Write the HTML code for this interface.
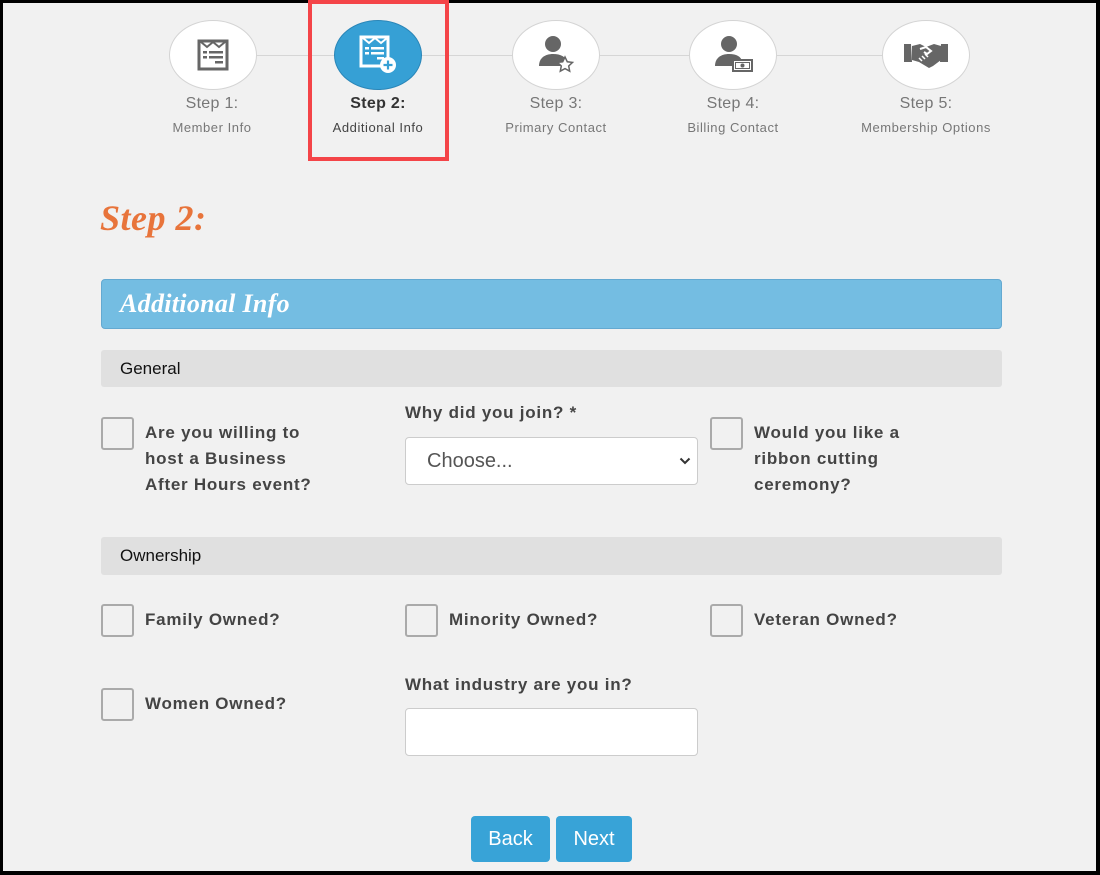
<!DOCTYPE html>
<html><head><meta charset="utf-8"><style>
*{box-sizing:border-box;margin:0;padding:0}
body{width:1100px;height:875px;background:#000;position:relative;overflow:hidden;font-family:"Liberation Sans",Arial,sans-serif}
#pg{position:absolute;left:3px;top:3px;width:1093px;height:868px;background:#f1f1f1}
.a{position:absolute}
.line{position:absolute;top:55px;height:1px;background:#d6d6d6}
.circ{position:absolute;width:88px;height:70px;top:20px;border-radius:50%;background:#fff;border:1px solid #d4d4d4;display:flex;align-items:center;justify-content:center}
.st{position:absolute;width:200px;text-align:center;color:#777;font-size:16px;top:95px;letter-spacing:0.3px}
.sub{position:absolute;width:200px;text-align:center;color:#777;font-size:13px;top:120px;letter-spacing:0.55px}
.bar{position:absolute;left:101px;width:901px;background:#e0e0e0;border-radius:3px;font-size:17px;color:#111;padding-left:19px}
.cb{position:absolute;width:33px;height:33px;border:2px solid #aaa;border-radius:3px;background:#f1f1f1}
.lb{position:absolute;font-size:17px;font-weight:bold;color:#444;line-height:26px;letter-spacing:0.75px}
.btn{position:absolute;top:816px;height:46px;background:#38a3d7;border-radius:4px;color:#fff;font-size:20px;text-align:center;line-height:46px}
</style></head><body>
<div id="pg"></div>
<div class="line" style="left:256px;width:80px"></div>
<div class="line" style="left:421px;width:92px"></div>
<div class="line" style="left:599px;width:92px"></div>
<div class="line" style="left:777px;width:106px"></div>

<div class="circ" style="left:169px"><svg width="34" height="34" viewBox="0 0 34 34"><rect x="3" y="3" width="28" height="28" fill="none" stroke="#666" stroke-width="3"/><path d="M5 4l6 5 6-5 6 5 6-5" fill="none" stroke="#666" stroke-width="2"/><rect x="7" y="13" width="4" height="2.5" fill="#666"/><rect x="13" y="13" width="14" height="2.5" fill="#666"/><rect x="7" y="18" width="4" height="2.5" fill="#666"/><rect x="13" y="18" width="14" height="2.5" fill="#666"/><rect x="19" y="23" width="8" height="2.5" fill="#666"/></svg></div>
<div class="circ" style="left:334px;background:#36a0d5;border-color:#2a86b8"><svg width="42" height="42" viewBox="0 0 42 42"><rect x="4" y="3" width="27" height="29" fill="none" stroke="#fff" stroke-width="3"/><path d="M6 4l6 5 6-5 6 5 6-5" fill="none" stroke="#fff" stroke-width="2"/><rect x="8" y="13" width="4" height="2.5" fill="#fff"/><rect x="14" y="13" width="13" height="2.5" fill="#fff"/><rect x="8" y="18" width="4" height="2.5" fill="#fff"/><rect x="14" y="18" width="13" height="2.5" fill="#fff"/><rect x="20" y="23" width="7" height="2.5" fill="#fff"/><circle cx="31" cy="31" r="8" fill="#fff"/><path d="M31 26.5v9M26.5 31h9" stroke="#36a0d5" stroke-width="2.2"/></svg></div>
<div class="circ" style="left:512px"><svg width="44" height="44" viewBox="0 0 44 44"><circle cx="19" cy="11" r="8" fill="#666"/><path d="M5 33c0-8 6-12 14-12s13 3 14 8v4z" fill="#666"/><path d="M31 24l2.3 4.8 5.2.6-3.8 3.6 1 5.2-4.7-2.6-4.7 2.6 1-5.2-3.8-3.6 5.2-.6z" fill="#fff" stroke="#666" stroke-width="1.5"/></svg></div>
<div class="circ" style="left:689px"><svg width="44" height="44" viewBox="0 0 44 44"><circle cx="18" cy="11" r="8" fill="#666"/><path d="M4 33c0-8 6-12 14-12s12 3 13 7v5z" fill="#666"/><rect x="22" y="27" width="19" height="11" fill="#fff" stroke="#666" stroke-width="2"/><rect x="24.5" y="29.5" width="14" height="6" fill="none" stroke="#666" stroke-width="1"/><circle cx="31.5" cy="32.5" r="2" fill="#666"/></svg></div>
<div class="circ" style="left:882px"><svg width="46" height="30" viewBox="0 0 46 30"><path d="M1 4h7l1 18H1z M45 4h-7l-1 18h8z" fill="#666"/><path d="M9 6l8-2 6 3 8-3 7 2v14l-8 6-4 2-5-3-5-3-7-2z" fill="#666"/><path d="M17 9l6-2 5 4-4 3-3-2" fill="none" stroke="#fff" stroke-width="2"/><path d="M16 18l3 3M19 16l3 3M22 14l3 3" stroke="#fff" stroke-width="1.5"/></svg></div>

<div class="st" style="left:112px">Step 1:</div><div class="sub" style="left:112px">Member Info</div>
<div class="st" style="left:278px;color:#333;font-weight:bold">Step 2:</div><div class="sub" style="left:278px;color:#444">Additional Info</div>
<div class="st" style="left:456px">Step 3:</div><div class="sub" style="left:456px">Primary Contact</div>
<div class="st" style="left:633px">Step 4:</div><div class="sub" style="left:633px">Billing Contact</div>
<div class="st" style="left:826px">Step 5:</div><div class="sub" style="left:826px">Membership Options</div>
<div class="a" style="left:308px;top:0;width:141px;height:161px;border:4px solid #f44448"></div>

<div class="a" style="left:100px;top:197px;font-family:'Liberation Serif',serif;font-style:italic;font-size:36px;color:#e8743b;font-weight:bold;letter-spacing:0.5px">Step 2:</div>
<div class="a" style="left:101px;top:279px;width:901px;height:50px;background:#74bde2;border:1px solid #64a9d1;border-radius:4px;padding-left:18px;font-family:'Liberation Serif',serif;font-style:italic;font-weight:bold;font-size:26px;color:#fff;line-height:48px;letter-spacing:0.3px">Additional Info</div>

<div class="bar" style="top:350px;height:37px;line-height:37px">General</div>
<div class="cb" style="left:101px;top:417px"></div>
<div class="lb" style="left:145px;top:420px">Are you willing to<br>host a Business<br>After Hours event?</div>
<div class="lb" style="left:405px;top:400px">Why did you join? *</div>
<div class="a" style="left:405px;top:437px;width:293px;height:48px;background:#fff;border:1px solid #ccc;border-radius:4px;font-size:20px;color:#555;line-height:46px;padding-left:21px">Choose...<svg class="a" style="right:6px;top:19px" width="12" height="8" viewBox="0 0 12 8"><path d="M1.5 1.5l4.5 4.5 4.5-4.5" fill="none" stroke="#333" stroke-width="2"/></svg></div>
<div class="cb" style="left:710px;top:417px"></div>
<div class="lb" style="left:754px;top:420px">Would you like a<br>ribbon cutting<br>ceremony?</div>

<div class="bar" style="top:537px;height:38px;line-height:38px">Ownership</div>
<div class="cb" style="left:101px;top:604px"></div><div class="lb" style="left:145px;top:607px">Family Owned?</div>
<div class="cb" style="left:405px;top:604px"></div><div class="lb" style="left:449px;top:607px">Minority Owned?</div>
<div class="cb" style="left:710px;top:604px"></div><div class="lb" style="left:754px;top:607px">Veteran Owned?</div>
<div class="cb" style="left:101px;top:688px"></div><div class="lb" style="left:145px;top:691px">Women Owned?</div>
<div class="lb" style="left:405px;top:672px">What industry are you in?</div>
<div class="a" style="left:405px;top:708px;width:293px;height:48px;background:#fff;border:1px solid #ccc;border-radius:4px"></div>

<div class="btn" style="left:471px;width:79px">Back</div>
<div class="btn" style="left:556px;width:76px">Next</div>
</body></html>
